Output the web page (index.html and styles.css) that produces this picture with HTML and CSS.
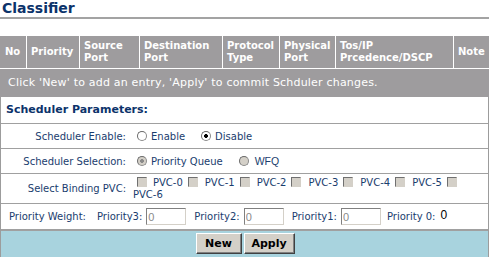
FILE: index.html
```html
<!DOCTYPE html>
<html lang="en">
<head>
    <meta charset="UTF-8">
    <title>Classifier</title>
    <link rel="stylesheet" href="styles.css">
</head>
<body>
    <div class="title">Classifier</div>

    <div class="rules">
        <div class="th">No</div>
        <div class="th">Priority</div>
        <div class="th">Source<br>Port</div>
        <div class="th">Destination<br>Port</div>
        <div class="th">Protocol<br>Type</div>
        <div class="th">Physical<br>Port</div>
        <div class="th">Tos/IP<br>Prcedence/DSCP</div>
        <div class="th">Note</div>
        <div class="msg">Click 'New' to add an entry, 'Apply' to commit Schduler changes.</div>
    </div>

    <div class="panel">
        <div class="panel-title">Scheduler Parameters:</div>

        <div class="row">
            <div class="label">Scheduler Enable:</div>
            <div class="field">
                <input type="radio" name="enable" class="radio">
                <span>Enable</span>
                <input type="radio" name="enable" class="radio next" checked>
                <span>Disable</span>
            </div>
        </div>

        <div class="row">
            <div class="label">Scheduler Selection:</div>
            <div class="field">
                <input type="radio" name="sel" class="radio" checked disabled>
                <span>Priority Queue</span>
                <input type="radio" name="sel" class="radio next" disabled>
                <span class="wfq">WFQ</span>
            </div>
        </div>

        <div class="row pvc-row">
            <div class="label">Select Binding PVC:</div>
            <div class="field pvc"><input type="checkbox" class="check" disabled><span class="pvc-name">PVC-0</span><input type="checkbox" class="check" disabled><span class="pvc-name">PVC-1</span><input type="checkbox" class="check" disabled><span class="pvc-name">PVC-2</span><input type="checkbox" class="check" disabled><span class="pvc-name">PVC-3</span><input type="checkbox" class="check" disabled><span class="pvc-name">PVC-4</span><input type="checkbox" class="check" disabled><span class="pvc-name">PVC-5</span><input type="checkbox" class="check" disabled><span class="pvc-name">PVC-6</span></div>
        </div>

        <div class="weights">
            <span class="pw">Priority Weight:</span>
            <span>Priority3:</span>
            <input type="text" class="weight" value="0" disabled>
            <span>Priority2:</span>
            <input type="text" class="weight" value="0" disabled>
            <span>Priority1:</span>
            <input type="text" class="weight" value="0" disabled>
            <span>Priority 0:</span>
            <span class="zero">0</span>
        </div>

        <div class="buttons">
            <button class="btn btn-new">New</button>
            <button class="btn btn-apply">Apply</button>
        </div>
    </div>
</body>
</html>
```

FILE: styles.css
```css
body {
    margin: 0;
    font-family: "DejaVu Sans", Verdana, sans-serif;
    font-size: 10px;
    color: #1a3d6e;
    background: #fff;
}
.title {
    height: 17px;
    line-height: 17px;
    padding-left: 2px;
    font-size: 14px;
    font-weight: bold;
    color: #0c336b;
    border-bottom: 2px solid #a3a3a3;
    margin-bottom: 17px;
}
.rules {
    display: grid;
    grid-template-columns: 26px 52px 59px 82px 56px 55px 117px 1fr;
    gap: 1px;
    background: #fff;
}
.th {
    height: 32px;
    display: flex;
    align-items: center;
    padding: 0 4px;
    background: #9e9c9e;
    color: #fff;
    font-weight: bold;
    line-height: 12px;
}
.th:first-child {
    padding-left: 5px;
}
.msg {
    grid-column: 1 / -1;
    height: 28px;
    line-height: 28px;
    padding-left: 8px;
    background: #9e9c9e;
    color: #fff;
    font-size: 11px;
    letter-spacing: 0.2px;
}
.panel {
    border: 1px solid #9c9c9c;
    border-top: none;
}
.panel-title {
    height: 26px;
    line-height: 26px;
    padding-left: 5px;
    font-size: 11px;
    font-weight: bold;
    color: #0c336b;
    border-bottom: 1px solid #a0a0a0;
}
.row {
    display: grid;
    grid-template-columns: 132px 1fr;
    align-items: center;
    height: 24px;
    border-bottom: 1px solid #a0a0a0;
}
.row.pvc-row {
    height: 29px;
}
.label {
    text-align: right;
    padding-right: 7px;
}
.field {
    display: flex;
    align-items: center;
}
.radio {
    appearance: none;
    box-sizing: border-box;
    width: 10px;
    height: 10px;
    margin: 0 4px;
    border: 1px solid #8a8a8a;
    border-top-color: #6a6a6a;
    border-left-color: #6a6a6a;
    border-radius: 50%;
    background: #fff;
}
.radio:checked {
    background: radial-gradient(circle, #000 0 1.6px, #fff 2.2px);
}
.radio:disabled {
    background: #d4d0c8;
}
.radio:disabled:checked {
    background: radial-gradient(circle, #8a8a8a 0 1.6px, #d4d0c8 2.2px);
}
.radio.next {
    margin-left: 16px;
}
.wfq {
    font-family: "Liberation Sans", Arial, sans-serif;
    font-size: 10.5px;
    margin-left: 2px;
}
.field.pvc {
    display: block;
    line-height: 12px;
    padding-top: 1px;
}
.pvc-name {
    white-space: nowrap;
}
.check {
    appearance: none;
    box-sizing: border-box;
    width: 10px;
    height: 10px;
    margin: 0 7px 0 5px;
    vertical-align: -1px;
    background: #d4d0c8;
    border: 1px solid #d4d0c8;
    border-top-color: #707070;
    border-left-color: #707070;
}
.check:first-child {
    margin-left: 4px;
    margin-right: 6px;
}
.weights {
    display: flex;
    align-items: center;
    height: 25px;
    padding-left: 8px;
    border-bottom: 2px solid #a0a0a0;
}
.pw {
    margin-right: 11px;
}
.weight {
    box-sizing: border-box;
    width: 40px;
    height: 17px;
    margin: 0 8px 0 4px;
    padding: 0 1px;
    font-family: "Liberation Sans", Arial, sans-serif;
    font-size: 11px;
    color: #8a8a8a;
    background: #fff;
    border: 1px solid #d4d0c8;
    border-top-color: #808080;
    border-left-color: #808080;
}
.weight:last-of-type {
    margin-right: 6px;
}
.zero {
    margin-left: 5px;
    margin-top: -3px;
    font-family: "Liberation Sans", Arial, sans-serif;
    font-size: 12px;
    color: #000;
}
.buttons {
    display: flex;
    justify-content: center;
    gap: 2px;
    height: 30px;
    padding-top: 2px;
    padding-left: 1px;
    background: #a8d3de;
}
.btn {
    box-sizing: border-box;
    height: 21px;
    padding: 0;
    font-family: "DejaVu Sans", Verdana, sans-serif;
    font-size: 11px;
    font-weight: bold;
    color: #000;
    background: #d4d0c8;
    border: 1px solid;
    border-color: #fff #404040 #404040 #fff;
    box-shadow: inset -1px -1px #808080;
}
.btn-new {
    width: 46px;
}
.btn-apply {
    width: 51px;
}
```
